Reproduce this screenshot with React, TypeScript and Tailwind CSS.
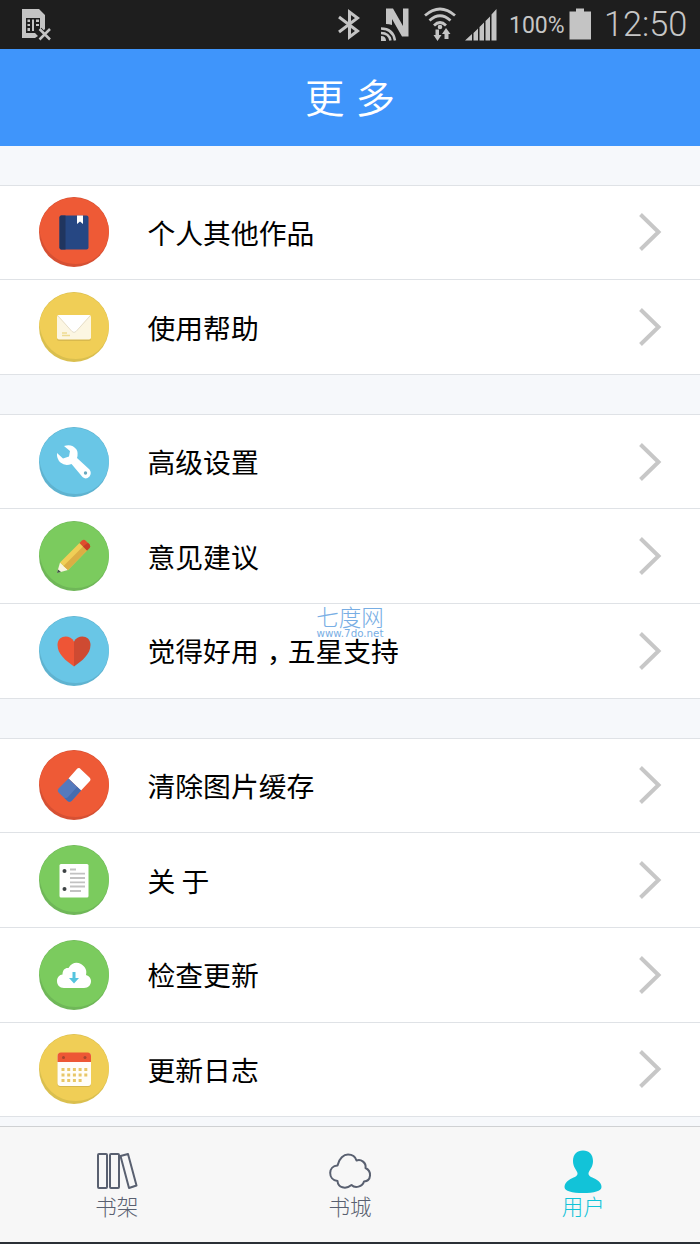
import type { ReactNode } from 'react';

type Item = {
  label: ReactNode;
  color: string;
  shade: string;
  icon: ReactNode;
};

const RED = { color: '#ee5a36', shade: '#d65033' };
const YELLOW = { color: '#f0ce56', shade: '#dabf4e' };
const BLUE = { color: '#69c6e6', shade: '#5fb3d0' };
const GREEN = { color: '#7bcb5e', shade: '#6fb758' };

const groups: Item[][] = [
  [
    { label: '个人其他作品', ...RED, icon: <BookIcon /> },
    { label: '使用帮助', ...YELLOW, icon: <MailIcon /> },
  ],
  [
    { label: '高级设置', ...BLUE, icon: <WrenchIcon /> },
    { label: '意见建议', ...GREEN, icon: <PencilIcon /> },
    {
      label: (
        <>
          觉得好用<span className="inline-block w-[29px] pl-[8px]">，</span>五星支持
        </>
      ),
      ...BLUE,
      icon: <HeartIcon />,
    },
  ],
  [
    { label: '清除图片缓存', ...RED, icon: <EraserIcon /> },
    { label: '关 于', ...GREEN, icon: <NoteIcon /> },
    { label: '检查更新', ...GREEN, icon: <CloudIcon /> },
    { label: '更新日志', ...YELLOW, icon: <CalendarIcon /> },
  ],
];

export default function App() {
  return (
    <div className="relative flex h-[1244px] w-[700px] flex-col overflow-hidden bg-[#f6f8fb] font-['Noto_Sans_CJK_SC',sans-serif]">
      <StatusBar />
      <header className="flex h-[97px] shrink-0 items-center justify-center pb-1 text-[39.5px] leading-none text-white bg-[#3f95fb]">
        <h1 className="font-[350] [word-spacing:2px]">更 多</h1>
      </header>

      <main className="flex h-[980px] shrink-0 flex-col gap-[39px] pt-[38.5px]">
        {groups.map((items, i) => (
          <ul key={i} className="border-t border-[#dfe2e6] bg-white">
            {items.map((item, j) => (
              <Row key={j} item={item} />
            ))}
          </ul>
        ))}
      </main>

      <TabBar />

      {/* Site mark over the list */}
      <div className="pointer-events-none absolute left-[300px] top-[605px] w-[100px] text-center text-[#78aee4]">
        <div className="text-[22.5px] font-light leading-[23px]">七度网</div>
        <div className="font-['DejaVu_Sans',sans-serif] text-[10.3px] leading-[11px]">www.7do.net</div>
      </div>
    </div>
  );
}

function Row({ item }: { item: Item }) {
  return (
    <li className="flex h-[94.625px] items-center border-b border-[#dfe2e6] pl-[39px] pr-[38px]">
      <svg width="70" height="70" viewBox="0 0 70 70" className="shrink-0">
        <circle cx="35" cy="35" r="35" fill={item.shade} />
        <path d="M0.2 32A35 35 0 0 1 70 35Q69 50 59 59Q49 67 37 67C18 67 3 54 0.2 32Z" fill={item.color} />
        {item.icon}
      </svg>
      <span className="ml-[38.5px] flex-1 whitespace-pre pt-px text-[27.8px] leading-none text-black">{item.label}</span>
      <svg width="24" height="40" viewBox="0 0 24 40" fill="none" stroke="#c7c7c7" strokeWidth="4">
        <path d="M2.5 2.5L20.5 20L2.5 37.5" />
      </svg>
    </li>
  );
}

function StatusBar() {
  return (
    <div className="flex h-[49px] shrink-0 items-center bg-[#1e1e1e] pl-[21px] font-['Roboto',sans-serif] font-light text-[#c6c6c6]">
      {/* Missing SIM */}
      <svg width="31" height="34" viewBox="0 0 31 34" fill="#c4c4c4">
        <path d="M1 1H18L24 7V21L21 24L18 21L14 25L17 28L14 30H1Z" />
        <path d="M5 10H19V25H5Z" fill="#1e1e1e" />
        <path d="M6.500 11.500H9V14H6.500ZM6.500 16H9V18H6.500ZM6.500 20H9V23H6.500ZM11 11.500H13V23H11ZM15 11.500H18V14H15ZM15 16H18V18H15Z" />
        <path d="M18.500 21.500L29 32M29 21.500L18.500 32" stroke="#1e1e1e" strokeWidth="5" />
        <path d="M18.500 21L29 31.500M29 21L18.500 31.500" stroke="#c4c4c4" strokeWidth="2.500" />
      </svg>
      {/* Bluetooth */}
      <svg className="ml-[285px]" width="24" height="34" viewBox="0 0 24 34" fill="none" stroke="#c4c4c4" strokeWidth="3">
        <path d="M2 9L20.5 23L12.500 29V4L20.5 10L2 24" />
      </svg>
      {/* NFC */}
      <svg className="ml-[19px]" width="31" height="34" viewBox="0 0 31 34" fill="#c4c4c4">
        <path d="M6 0.500H13L23 18V0.500H28.500V28.500H22L12 11V17Q9 16 6 16Z" />
        <path d="M1 20.500Q13 20.500 15 32.500M1 25Q9 25 10.500 32.500" fill="none" stroke="#c4c4c4" strokeWidth="2.500" />
        <path d="M1 28Q6 28 6 33H1Z" />
      </svg>
      {/* Wifi with transfer arrows */}
      <svg className="ml-[12px]" width="34" height="36" viewBox="0 0 34 36" fill="none" stroke="#c4c4c4" strokeWidth="2.800">
        <path d="M2 8.500Q17 -4.500 32 8.500M6.500 13.500Q17 4 27.500 13.500M11 18.500Q17 12.500 23 18.500" />
        <circle cx="17" cy="20" r="2.300" fill="#c4c4c4" stroke="none" />
        <path d="M10.500 28H12.500V22.500H16V28H18.500L14.500 34L10.500 28ZM19 27L23 21L27.500 27H25.500V32H21.500V27Z" fill="#c4c4c4" stroke="none" />
      </svg>
      {/* Signal */}
      <svg className="ml-[8px]" width="32" height="34" viewBox="0 0 32 34" fill="#c4c4c4">
        <path d="M0 32.500L7 26V32.500ZM8.500 25L13 20.500V32.500H8.500ZM14.500 19L19 14.500V32.500H14.500ZM20.500 13L25 8.500V32.500H20.500ZM26.500 6.500L31.500 1V32.500H26.500Z" />
      </svg>
      <span className="ml-[12px] w-[60px] whitespace-nowrap pt-0.5 text-[23px] font-normal leading-none">100%</span>
      <svg width="23" height="34" viewBox="0 0 23 34" fill="#c4c4c4">
        <path d="M0.500 3.500H7V0.500H15V3.500H22V31.500H0.500Z" />
      </svg>
      <span className="ml-[12px] whitespace-nowrap text-[34.3px] leading-none">12:50</span>
    </div>
  );
}

function TabBar() {
  return (
    <nav className="grid h-[118px] shrink-0 grid-cols-3 border-b-2 border-t border-b-[#2a3036] border-t-[#cfd1d3] bg-[#f7f7f7] text-[21.5px] font-light leading-none text-[#596070]">
      <div className="flex flex-col items-center pt-[22px]">
        <svg width="44" height="44" viewBox="0 0 44 44" fill="none" stroke="#596070" strokeWidth="2" strokeLinejoin="round">
          <rect x="3" y="5" width="9" height="34" rx="1" />
          <rect x="15" y="5" width="9" height="34" rx="1" />
          <path d="M25.500 7L33 5L41.500 36.500L34 39Z" />
        </svg>
        <span className="mt-[2px]">书架</span>
      </div>
      <div className="flex flex-col items-center pt-[22px]">
        <svg width="44" height="44" viewBox="0 0 44 44" fill="none" stroke="#596070" strokeWidth="2" strokeLinejoin="round">
          <path d="M9.500 16.500C11 9 16 5.500 20 5.500C24.500 5.500 27.500 8 28.500 11.500C33 9.500 38.500 14 37.500 19C44 22 43.500 32 36 32.500C34.500 38 27 39.500 23.500 36C17.500 41 10 38.500 9.500 32C-0.500 30.500 0 17 9.500 16.500Z" />
        </svg>
        <span className="mt-[2px]">书城</span>
      </div>
      <div className="flex flex-col items-center pt-[22px] text-[#12c3d8]">
        <svg width="44" height="44" viewBox="0 0 44 44" fill="#12c3d8">
          <path d="M22 1.500C28 1.500 32 5.500 32 12C32 18 29 20 27.500 24C27 28 32 28 36 31C39 33 40.500 35 40.500 38C40.500 42 33 44 22 44C11 44 3.500 42 3.500 38C3.500 35 5 33 8 31C12 28 17 28 16.500 24C15 20 12 18 12 12C12 5.500 16 1.500 22 1.500Z" />
        </svg>
        <span className="mt-[2px]">用户</span>
      </div>
    </nav>
  );
}

function BookIcon() {
  return (
    <g>
      <rect x="20.500" y="18.500" width="29" height="34" rx="2" fill="#264783" />
      <path d="M22 18.500H26.500V52.500H22Q20.500 52.500 20.500 50.500V20.500Q20.500 18.500 22 18.500Z" fill="#20355f" />
      <path d="M38 18.500H44V27L41 24.500L38 27Z" fill="#fff" />
    </g>
  );
}

function MailIcon() {
  return (
    <g>
      <rect x="18" y="24" width="34" height="25" rx="2" fill="#d9b94d" />
      <rect x="18" y="23" width="34" height="24.500" rx="2" fill="#fcf6e2" />
      <path d="M19 23H51L36.500 40Q35 41.500 33.500 40Z" fill="#fff" />
      <path d="M19 24L33 39.500Q35 41.500 37 39.500L51 24" fill="none" stroke="#e6dec9" />
      <path d="M23 41H28M23 43.500H31" stroke="#eedb91" strokeWidth="1.5" />
    </g>
  );
}

function WrenchIcon() {
  return (
    <g>
      <path
        d="M25 19Q33 16.500 37.500 22.500Q39.500 26 38 31L50.500 42.500Q53 46 50.500 49.500Q47 53 43.500 50L32.500 37Q26 39.500 21.500 35.500Q17.500 32 18 26L24 31.500L30 29.500L31 24Z"
        fill="#fff"
      />
      <circle cx="46.500" cy="46" r="1.700" fill="#69a9bf" />
    </g>
  );
}

function PencilIcon() {
  return (
    <g>
      <path d="M18 52L21 41.500L29 49Z" fill="#f9f4df" />
      <path d="M18 52L19 48.500L22 51Z" fill="#3d5442" />
      <path d="M21 41.500L40.500 22L48 29.500L29 49Z" fill="#f0ce56" />
      <path d="M24.500 45L44 25.500L48 29.500L29 49Z" fill="#dcae44" />
      <path d="M40.500 22L43 19.500Q45 18 47 20L50.500 23.500Q52 25.500 50.500 27L48 29.500Z" fill="#e04e2e" />
      <path d="M44 25.500L49 21.800L50.500 23.500Q52 25.500 50.500 27L48 29.500Z" fill="#c63f26" />
    </g>
  );
}

function HeartIcon() {
  return (
    <g>
      <path d="M35 50.500C27 45 18.500 38 18.500 29C18.500 19 31 18 35 25.500Z" fill="#ee5536" />
      <path d="M35 50.500C43 45 51.500 38 51.500 29C51.500 19 39 18 35 25.500Z" fill="#ce4a32" />
    </g>
  );
}

function EraserIcon() {
  return (
    <g>
      <path d="M37 20Q39.500 16.500 42 19.500L50 27Q53 29.500 50 32L42 40.500L29.500 28.500Z" fill="#fff" />
      <path d="M29.500 28.500L42 40.500L33 50.500Q30.500 53 28 50.500L20 43Q17.500 40.500 20 38Z" fill="#557abd" />
      <path d="M38 37L42 40.500L33 50.500Q30.500 53 28 50.500L25 47.500Q27.500 49 29.500 46.500Z" fill="#466caf" />
    </g>
  );
}

function NoteIcon() {
  return (
    <g>
      <rect x="20.500" y="19" width="29" height="33.500" rx="1.500" fill="#fff" />
      <circle cx="25.500" cy="26" r="2" fill="#3d4245" />
      <circle cx="25.500" cy="44" r="2" fill="#3d4245" />
      <path d="M31 24.500H37M31 28.700H46M31 33H46M31 37.300H46M31 41.500H46M31 46H42" stroke="#c2c2c2" strokeWidth="1.800" />
    </g>
  );
}

function CloudIcon() {
  return (
    <g>
      <path
        d="M25 48C20.500 48 18 45 18 41C18 37.500 20.500 34.500 23.500 34.500C23.500 29.500 26.500 27.500 29.500 28C33 22 38 22 42 24C47 27 48 31 47 35C50.500 36 52 38.500 52 41C52 45 49.500 48 45 48Z"
        fill="#fff"
      />
      <path d="M33.500 32H36.500V38H40L35 43.500L30 38H33.500Z" fill="#55c4de" />
    </g>
  );
}

function CalendarIcon() {
  return (
    <g>
      <rect x="18.500" y="19" width="33.500" height="34" rx="3" fill="#d5b64c" />
      <rect x="18.500" y="19" width="33.500" height="33" rx="3" fill="#fffdf8" />
      <path d="M18.500 28V22Q18.500 18.500 22 18.500H48.500Q52 18.500 52 22V28Z" fill="#ed5735" />
      <circle cx="24.500" cy="23.500" r="1.500" fill="#a7442f" />
      <circle cx="46" cy="23.500" r="1.500" fill="#a7442f" />
      <path d="M22.500 35.500H48.500M22.500 41H48.500M22.500 46.500H43" stroke="#e8c768" strokeWidth="3" strokeDasharray="3 2.700" />
    </g>
  );
}
